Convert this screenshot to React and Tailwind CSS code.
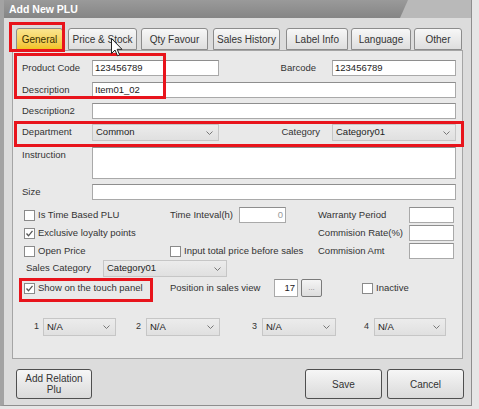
import React from 'react';

const font = { fontFamily: '"Liberation Sans", Arial, sans-serif' };

const Input = ({ className = '', value = '', right = false, muted = false }) => (
    <div
        className={`h-full bg-white border border-[#a9a9a9] border-t-[#8e8e8e] flex items-center px-[2px] text-[9.5px] ${muted ? 'text-[#999]' : 'text-[#222]'} ${right ? 'justify-end' : ''} ${className}`}
    >
        {value}
    </div>
);

const Select = ({ className = '', value = '' }) => (
    <div
        className={`h-full bg-linear-to-b from-[#ececec] to-[#e0e0e0] border border-[#c6c6c6] flex items-center justify-between pl-[3px] pr-[5px] text-[9.5px] text-[#222] ${className}`}
    >
        <span>{value}</span>
        <svg width="7" height="4" viewBox="0 0 7 4">
            <path d="M0.5 0.5 L3.5 3.5 L6.5 0.5" fill="none" stroke="#777" strokeWidth="1" />
        </svg>
    </div>
);

const Check = ({ checked = false, label, className = '' }) => (
    <div className={`flex items-center gap-[3px] text-[9.5px] text-[#333] ${className}`}>
        <div className="w-[11px] h-[11px] bg-white border border-[#8a8a8a] flex items-center justify-center shrink-0">
            {checked && (
                <svg width="9" height="9" viewBox="0 0 9 9">
                    <path d="M1.5 4.5 L3.5 6.8 L7.5 1.8" fill="none" stroke="#555" strokeWidth="1.3" />
                </svg>
            )}
        </div>
        <span>{label}</span>
    </div>
);

const tabs = [
    { name: 'General', cls: 'w-[47px]', active: true },
    { name: 'Price & Stock', cls: 'w-[69px] ml-[5px]' },
    { name: 'Qty Favour', cls: 'w-[67px] ml-[4px]' },
    { name: 'Sales History', cls: 'w-[67px] ml-[5px]' },
    { name: 'Label Info', cls: 'w-[62px] ml-[6px]' },
    { name: 'Language', cls: 'w-[60px] ml-[3px]' },
    { name: 'Other', cls: 'w-[48px] ml-[3px]' },
];

const Button = ({ className = '', children }) => (
    <div
        className={`h-full bg-linear-to-b from-[#f6f6f6] to-[#dadada] border border-[#4f4f4f] rounded-[3px] flex items-center justify-center text-center leading-[11px] text-[10px] text-[#333] ${className}`}
    >
        {children}
    </div>
);

export default function App() {
    return (
        <div className="w-[479px] h-[409px] bg-[#e6e6e6] relative overflow-hidden" style={font}>
            <div className="w-[472px] h-[406px] bg-[#dcdcdc] border-l-[4px] border-l-[#a3a3a3] border-r border-r-[#8e8e8e] border-b border-b-[#8e8e8e] flex flex-col">
                {/* title bar */}
                <div className="h-[18px] bg-[#b9b9b9] relative shrink-0">
                    <div className="absolute inset-0 bg-linear-to-b from-[#9a9a9a] to-[#858585] [clip-path:polygon(0_0,404px_0,396px_100%,0_100%)]" />
                    <div className="relative pl-[5px] leading-[18px] text-[10.5px] font-bold text-white">Add New PLU</div>
                </div>

                {/* tabs */}
                <div className="flex items-end ml-[12px] mt-[10px] h-[22px] shrink-0">
                    {tabs.map((t) => (
                        <div
                            key={t.name}
                            className={`${t.cls} h-[22px] rounded-t-[3px] border border-[#8c8c8c] flex items-center justify-center text-[10px] ${
                                t.active
                                    ? 'bg-linear-to-b from-[#fbe68e] to-[#f1c320] text-[#3a3000]'
                                    : 'bg-linear-to-b from-[#f7f7f7] to-[#dedede] text-[#333]'
                            }`}
                        >
                            {t.name}
                        </div>
                    ))}
                </div>

                {/* panel */}
                <div className="ml-[8px] w-[451px] h-[309px] bg-[#e9e9e9] border border-[#a5a5a5] pt-[9px] pl-[9px] flex flex-col shrink-0 text-[9.5px] text-[#333]">
                    <div className="flex items-center h-[16px]">
                        <div className="w-[70px]">Product Code</div>
                        <Input className="w-[127px]" value="123456789" />
                        <div className="w-[113px] text-right pr-[16px]">Barcode</div>
                        <Input className="w-[124px]" value="123456789" />
                    </div>
                    <div className="flex items-center h-[16px] mt-[6px]">
                        <div className="w-[70px]">Description</div>
                        <Input className="w-[364px]" value="Item01_02" />
                    </div>
                    <div className="flex items-center h-[16px] mt-[5px]">
                        <div className="w-[70px]">Description2</div>
                        <Input className="w-[364px]" />
                    </div>
                    <div className="flex items-center h-[17px] mt-[5px]">
                        <div className="w-[70px]">Department</div>
                        <Select className="w-[127px]" value="Common" />
                        <div className="w-[113px] text-right pr-[12px]">Category</div>
                        <Select className="w-[124px]" value="Category01" />
                    </div>
                    <div className="flex h-[32px] mt-[6px]">
                        <div className="w-[70px] pt-[1px]">Instruction</div>
                        <Input className="w-[364px]" />
                    </div>
                    <div className="flex items-center h-[16px] mt-[5px]">
                        <div className="w-[70px]">Size</div>
                        <Input className="w-[364px]" />
                    </div>

                    <div className="flex items-center h-[16px] mt-[7px]">
                        <Check className="w-[148px] pl-[2px]" label="Is Time Based PLU" />
                        <div className="w-[69px]">Time Inteval(h)</div>
                        <Input className="w-[47px]" value="0" right muted />
                        <div className="w-[32px]" />
                        <div className="w-[91px]">Warranty Period</div>
                        <Input className="w-[45px]" />
                    </div>
                    <div className="flex items-center h-[16px] mt-[2px]">
                        <Check className="w-[296px] pl-[2px]" checked label="Exclusive loyalty points" />
                        <div className="w-[91px]">Commision Rate(%)</div>
                        <Input className="w-[45px]" />
                    </div>
                    <div className="flex items-center h-[16px] mt-[2px]">
                        <Check className="w-[148px] pl-[2px]" label="Open Price" />
                        <Check className="w-[148px]" label="Input total price before sales" />
                        <div className="w-[91px]">Commision Amt</div>
                        <Input className="w-[45px]" />
                    </div>
                    <div className="flex items-center h-[17px] mt-[1px]">
                        <div className="w-[81px] pl-[4px]">Sales Category</div>
                        <Select className="w-[124px]" value="Category01" />
                    </div>
                    <div className="flex items-center h-[18px] mt-[2px]">
                        <Check className="w-[148px] pl-[2px]" checked label="Show on the touch panel" />
                        <div className="w-[104px]">Position in sales view</div>
                        <Input className="w-[24px] h-[16px]" value="17" right />
                        <div className="ml-[3px] w-[21px] h-[18px] bg-linear-to-b from-[#f4f4f4] to-[#dddddd] border border-[#7a7a7a] rounded-[2px] flex items-center justify-center text-[8px] text-[#888]">
                            ...
                        </div>
                        <div className="w-[40px]" />
                        <Check label="Inactive" />
                    </div>
                    <div className="flex items-center h-[18px] mt-[21px] text-[9px]">
                        <div className="w-[21px] text-right pr-[4px]">1</div>
                        <Select className="w-[73px]" value="N/A" />
                        <div className="w-[30px] text-right pr-[5px]">2</div>
                        <Select className="w-[74px]" value="N/A" />
                        <div className="w-[42px] text-right pr-[5px]">3</div>
                        <Select className="w-[74px]" value="N/A" />
                        <div className="w-[38px] text-right pr-[5px]">4</div>
                        <Select className="w-[72px]" value="N/A" />
                    </div>
                </div>

                {/* buttons */}
                <div className="flex h-[30px] mt-[10px] ml-[12px] shrink-0">
                    <Button className="w-[76px]">
                        Add Relation
                        <br />
                        Plu
                    </Button>
                    <div className="w-[213px]" />
                    <Button className="w-[77px]">Save</Button>
                    <Button className="w-[77px] ml-[5px]">Cancel</Button>
                </div>
            </div>

            {/* red annotation boxes */}
            <div className="absolute left-[9px] top-[22px] w-[56px] h-[30px] border-[3px] border-[#e8141c]" />
            <div className="absolute left-[14px] top-[53px] w-[152px] h-[46px] border-[3px] border-[#e8141c]" />
            <div className="absolute left-[14px] top-[121px] w-[450px] h-[26px] border-[3px] border-[#e8141c]" />
            <div className="absolute left-[19px] top-[278px] w-[134px] h-[24px] border-[3px] border-[#e8141c]" />

            {/* mouse cursor */}
            <svg className="absolute left-[111px] top-[38px]" width="12" height="19" viewBox="0 0 12 19">
                <path d="M0.5 0.5 L0.5 15.5 L4 12 L6.5 17.8 L8.6 16.9 L6.2 11.3 L11 11.3 Z" fill="#fff" stroke="#222" strokeWidth="1" strokeLinejoin="round" />
            </svg>
        </div>
    );
}
